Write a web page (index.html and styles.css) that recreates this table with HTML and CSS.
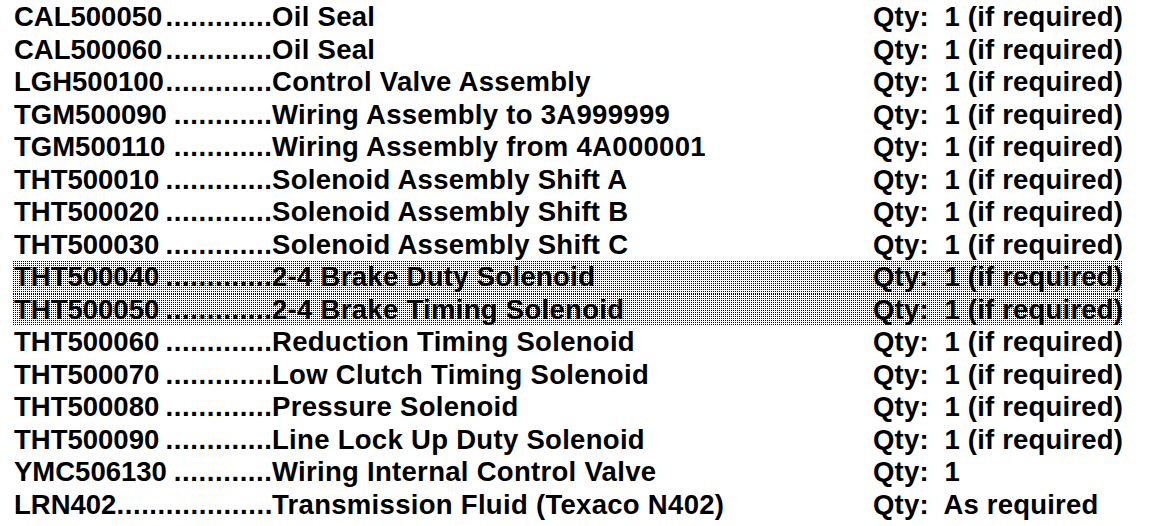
FILE: index.html
```html
<!DOCTYPE html>
<html lang="en">
<head>
<meta charset="utf-8">
<title>Parts list</title>
<link rel="stylesheet" href="styles.css">
</head>
<body>
<div class="parts">
  <div class="row"><div class="part"><span class="code">CAL500050</span><span class="lead">.............</span></div><div class="desc">Oil Seal</div><div class="qty">Qty:  1 (if required)</div></div>
  <div class="row"><div class="part"><span class="code">CAL500060</span><span class="lead">.............</span></div><div class="desc">Oil Seal</div><div class="qty">Qty:  1 (if required)</div></div>
  <div class="row"><div class="part"><span class="code">LGH500100</span><span class="lead">.............</span></div><div class="desc">Control Valve Assembly</div><div class="qty">Qty:  1 (if required)</div></div>
  <div class="row"><div class="part"><span class="code">TGM500090</span><span class="lead">............</span></div><div class="desc">Wiring Assembly to 3A999999</div><div class="qty">Qty:  1 (if required)</div></div>
  <div class="row"><div class="part"><span class="code">TGM500110</span><span class="lead">............</span></div><div class="desc">Wiring Assembly from 4A000001</div><div class="qty">Qty:  1 (if required)</div></div>
  <div class="row"><div class="part"><span class="code">THT500010</span><span class="lead">.............</span></div><div class="desc">Solenoid Assembly Shift A</div><div class="qty">Qty:  1 (if required)</div></div>
  <div class="row"><div class="part"><span class="code">THT500020</span><span class="lead">.............</span></div><div class="desc">Solenoid Assembly Shift B</div><div class="qty">Qty:  1 (if required)</div></div>
  <div class="row"><div class="part"><span class="code">THT500030</span><span class="lead">.............</span></div><div class="desc">Solenoid Assembly Shift C</div><div class="qty">Qty:  1 (if required)</div></div>
  <div class="row marked"><div class="part"><span class="code">THT500040</span><span class="lead">.............</span></div><div class="desc">2-4 Brake Duty Solenoid</div><div class="qty">Qty:  1 (if required)</div></div>
  <div class="row marked"><div class="part"><span class="code">THT500050</span><span class="lead">.............</span></div><div class="desc">2-4 Brake Timing Solenoid</div><div class="qty">Qty:  1 (if required)</div></div>
  <div class="row"><div class="part"><span class="code">THT500060</span><span class="lead">.............</span></div><div class="desc">Reduction Timing Solenoid</div><div class="qty">Qty:  1 (if required)</div></div>
  <div class="row"><div class="part"><span class="code">THT500070</span><span class="lead">.............</span></div><div class="desc">Low Clutch Timing Solenoid</div><div class="qty">Qty:  1 (if required)</div></div>
  <div class="row"><div class="part"><span class="code">THT500080</span><span class="lead">.............</span></div><div class="desc">Pressure Solenoid</div><div class="qty">Qty:  1 (if required)</div></div>
  <div class="row"><div class="part"><span class="code">THT500090</span><span class="lead">.............</span></div><div class="desc">Line Lock Up Duty Solenoid</div><div class="qty">Qty:  1 (if required)</div></div>
  <div class="row"><div class="part"><span class="code">YMC506130</span><span class="lead">............</span></div><div class="desc">Wiring Internal Control Valve</div><div class="qty">Qty:  1</div></div>
  <div class="row"><div class="part"><span class="code">LRN402</span><span class="lead">...................</span></div><div class="desc">Transmission Fluid (Texaco N402)</div><div class="qty">Qty:  As required</div></div>
</div>
</body>
</html>
```

FILE: styles.css
```css
html, body {
  margin: 0;
  padding: 0;
  background: #ffffff;
}

body {
  font-family: "Liberation Sans", Arial, sans-serif;
  font-weight: bold;
  font-size: 27.5px;
  color: #000000;
}

.parts {
  display: flex;
  flex-direction: column;
  width: 1110px;
  margin-left: 13px;
  padding-top: 1px;
}

.row {
  display: grid;
  grid-template-columns: 259px 601px 1fr;
  height: 32.5px;
  line-height: 32.5px;
  white-space: nowrap;
}

.row.marked {
  background-color: #ffffff;
  background-image:
    linear-gradient(to bottom, transparent 1px, #ffffff 1px),
    linear-gradient(to right, #000000 1px, #ffffff 1px);
  background-size: 2px 2px, 2px 2px;
}

.part {
  display: flex;
  justify-content: space-between;
  padding-left: 1px;
}

.code {
  flex: none;
}

.lead {
  flex: none;
  letter-spacing: 0.6px;
  margin-right: -0.6px;
}

.qty {
  white-space: pre;
  letter-spacing: 0.2px;
}

.desc {
  letter-spacing: 0.3px;
}
```
